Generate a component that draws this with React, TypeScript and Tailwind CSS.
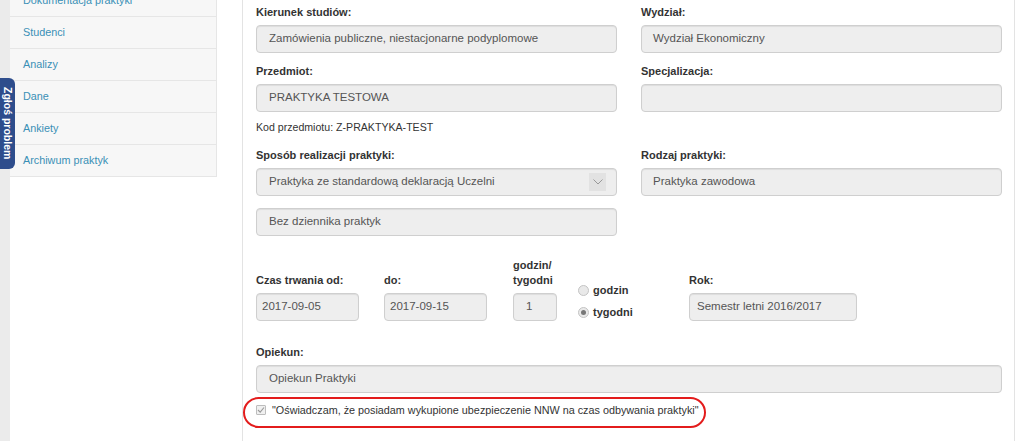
import React from "react";

const menu = [
  "Dokumentacja praktyki",
  "Studenci",
  "Analizy",
  "Dane",
  "Ankiety",
  "Archiwum praktyk",
];

function Label({ children }: { children: React.ReactNode }) {
  return (
    <div className="h-[15px] leading-[15px] mb-[5px] text-[11px] font-bold text-[#333]">
      {children}
    </div>
  );
}

function Input({ value, className = "" }: { value?: string; className?: string }) {
  return (
    <div
      className={
        "h-[28px] rounded-[4px] border border-[#cfcfcf] bg-[#eeeeee] shadow-[inset_0_1px_1px_rgba(0,0,0,0.075)] flex items-center text-[11.5px] text-[#555] whitespace-nowrap " +
        className
      }
    >
      {value}
    </div>
  );
}

function Radio({ checked }: { checked?: boolean }) {
  return (
    <span className="w-[11px] h-[11px] rounded-full border border-[#c4c4c4] bg-[#e9e9e9] flex items-center justify-center shrink-0">
      {checked && <span className="w-[5px] h-[5px] rounded-full bg-[#777]" />}
    </span>
  );
}

export default function App() {
  return (
    <div className="relative w-[1024px] h-[441px] overflow-hidden bg-white flex font-['Liberation_Sans',Arial,sans-serif]">
      <div className="w-[10px] shrink-0 bg-[#ebebeb]" />
      <aside className="w-[207px] shrink-0">
        <ul className="-mt-[15px]">
          {menu.map((m) => (
            <li
              key={m}
              className="h-[32px] bg-[#f7f7f7] border-b border-r border-[#e6e6e6] pl-[13px] flex items-center text-[10.8px] text-[#3a90b6]"
            >
              {m}
            </li>
          ))}
        </ul>
      </aside>
      <div className="w-[25px] shrink-0" />
      <main className="w-[773px] shrink-0 border-x border-[#e3e3e3] pl-[13px] pr-[12px] pt-[5px]">
        <div className="grid grid-cols-2 gap-x-[24px]">
          <div>
            <Label>Kierunek studiów:</Label>
            <Input value="Zamówienia publiczne, niestacjonarne podyplomowe" className="pl-[12px]" />
          </div>
          <div>
            <Label>Wydział:</Label>
            <Input value="Wydział Ekonomiczny" className="pl-[11px]" />
          </div>

          <div className="mt-[11px]">
            <Label>Przedmiot:</Label>
            <Input value="PRAKTYKA TESTOWA" className="pl-[12px]" />
            <div className="mt-[8px] h-[15px] leading-[15px] text-[10.6px] text-[#333]">
              Kod przedmiotu: Z-PRAKTYKA-TEST
            </div>
          </div>
          <div className="mt-[11px]">
            <Label>Specjalizacja:</Label>
            <Input />
          </div>

          <div className="mt-[13px]">
            <Label>Sposób realizacji praktyki:</Label>
            <div className="h-[28px] rounded-[4px] border border-[#cfcfcf] bg-[#eeeeee] shadow-[inset_0_1px_1px_rgba(0,0,0,0.075)] flex items-center justify-between pl-[12px] pr-[10px] text-[11.5px] text-[#555] whitespace-nowrap">
              <span>Praktyka ze standardową deklaracją Uczelni</span>
              <span className="w-[17px] h-[18px] bg-[#e2e2e2] flex items-center justify-center">
                <svg width="10" height="6" viewBox="0 0 10 6" fill="none">
                  <path d="M0.5 0.5 L5 5 L9.5 0.5" stroke="#999" strokeWidth="1" />
                </svg>
              </span>
            </div>
            <div className="mt-[12px]">
              <Input value="Bez dziennika praktyk" className="pl-[12px]" />
            </div>
          </div>
          <div className="mt-[13px]">
            <Label>Rodzaj praktyki:</Label>
            <Input value="Praktyka zawodowa" className="pl-[11px]" />
          </div>
        </div>

        <div className="mt-[22px] flex items-end">
          <div className="w-[103px]">
            <Label>Czas trwania od:</Label>
            <Input value="2017-09-05" className="pl-[5px]" />
          </div>
          <div className="w-[103px] ml-[25px]">
            <Label>do:</Label>
            <Input value="2017-09-15" className="pl-[5px]" />
          </div>
          <div className="w-[44px] ml-[26px]">
            <div className="leading-[15px] mb-[5px] text-[11px] font-bold text-[#333]">
              godzin/
              <br />
              tygodni
            </div>
            <Input value="1" className="pl-[12px]" />
          </div>
          <div className="w-[60px] ml-[21px] -mb-[2px]">
            <div className="h-[22px] flex items-center gap-[4px] text-[11px] font-bold text-[#333]">
              <Radio />
              godzin
            </div>
            <div className="h-[22px] flex items-center gap-[4px] text-[11px] font-bold text-[#333]">
              <Radio checked />
              tygodni
            </div>
          </div>
          <div className="w-[168px] ml-[51px]">
            <Label>Rok:</Label>
            <Input value="Semestr letni 2016/2017" className="pl-[7px]" />
          </div>
        </div>

        <div className="mt-[24px]">
          <Label>Opiekun:</Label>
          <Input value="Opiekun Praktyki" className="pl-[12px]" />
        </div>

        <div className="mt-[9px] h-[16px] flex items-center text-[10.8px] text-[#333]">
          <span className="w-[10px] h-[10px] border border-[#bdbdbd] bg-[#f0f0f0] rounded-[1px] flex items-center justify-center shrink-0">
            <svg width="8" height="8" viewBox="0 0 8 8" fill="none">
              <path d="M1 4 L3.2 6.2 L7 1.5" stroke="#9a9a9a" strokeWidth="1.1" />
            </svg>
          </span>
          <span className="ml-[6px]">
            "Oświadczam, że posiadam wykupione ubezpieczenie NNW na czas odbywania praktyki"
          </span>
        </div>
      </main>

      <div className="absolute left-0 top-[78px] w-[15px] h-[91px] bg-[#2e4d8c] rounded-r-[6px] flex items-center justify-center">
        <span className="[writing-mode:vertical-rl] text-white font-bold text-[10.5px] leading-[15px] whitespace-nowrap">
          Zgłoś problem
        </span>
      </div>

      <div className="absolute left-[243px] top-[397px] w-[463px] h-[31px] border-2 border-[#e31c1c] rounded-[16px]" />
    </div>
  );
}
